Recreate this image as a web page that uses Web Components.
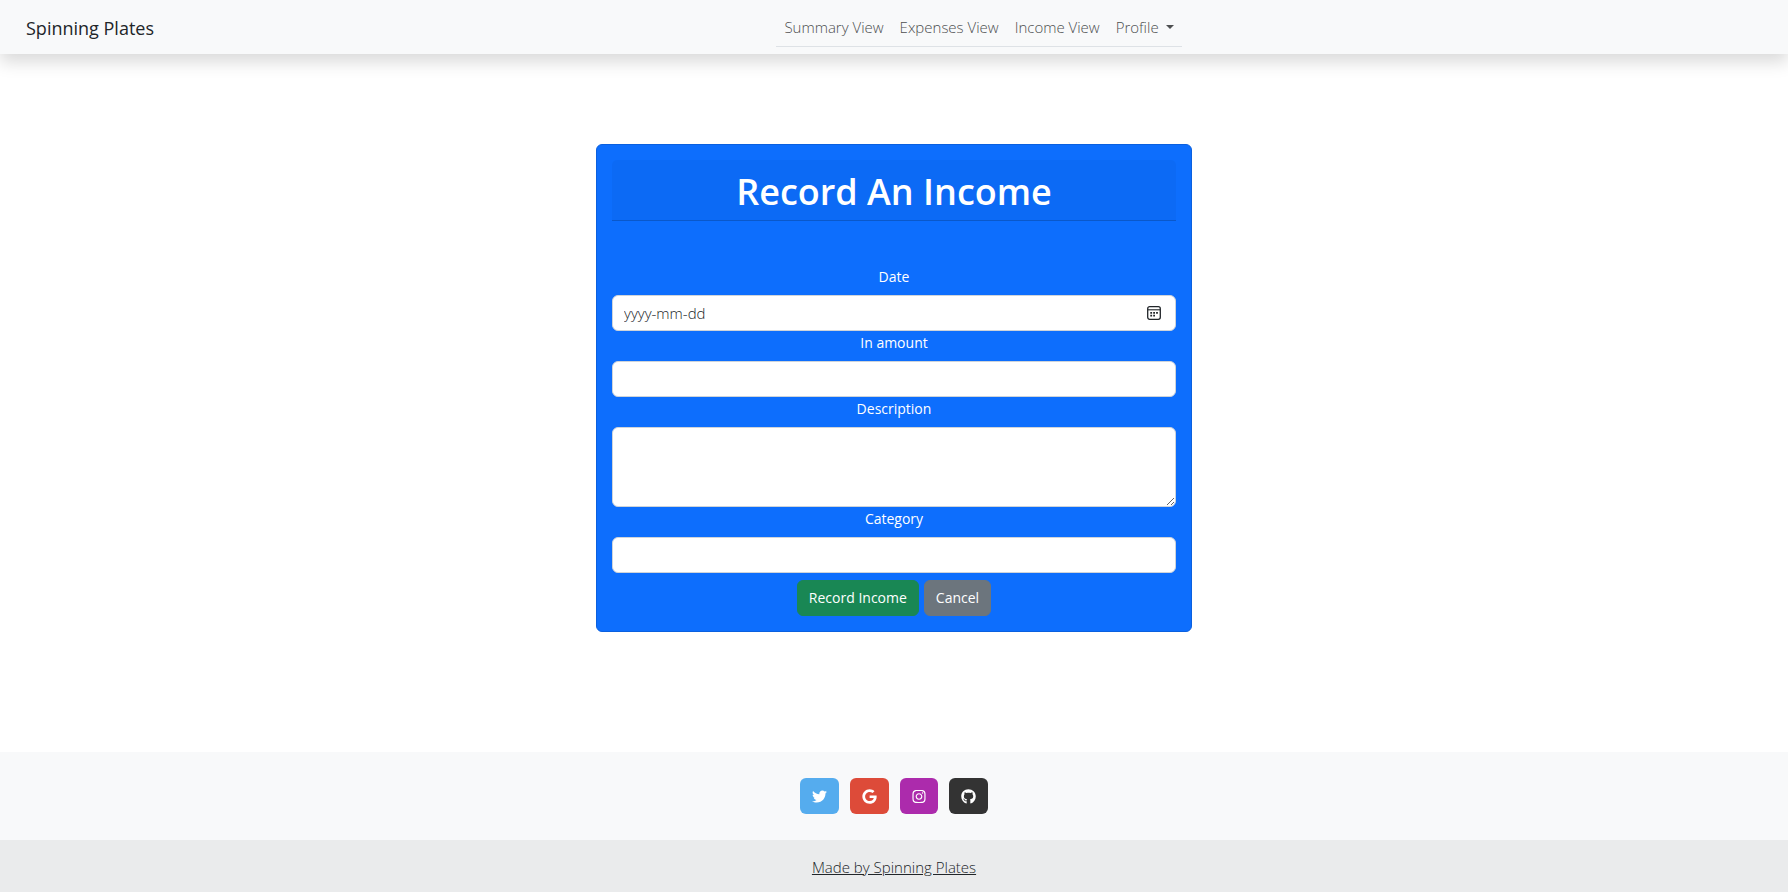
<!DOCTYPE html>
<html lang="en">
<head>
<meta charset="utf-8">
<title>Spinning Plates - Record An Income</title>
<style>
  body { margin: 0; font: 14px/22px "Open Sans", "Noto Sans", sans-serif; color: #212529; background: #fff; }
</style>
</head>
<body>
<app-page>
  <nav-bar slot="header" brand="Spinning Plates">
    <nav-item>Summary View</nav-item>
    <nav-item>Expenses View</nav-item>
    <nav-item>Income View</nav-item>
    <nav-item dropdown>Profile</nav-item>
  </nav-bar>
  <form-card heading="Record An Income">
    <form-field type="date" label="Date"></form-field>
    <form-field type="text" label="In amount"></form-field>
    <form-field type="textarea" label="Description"></form-field>
    <form-field type="text" label="Category"></form-field>
    <action-button slot="actions" variant="success">Record Income</action-button>
    <action-button slot="actions" variant="secondary">Cancel</action-button>
  </form-card>
  <page-footer slot="footer">
    <social-link name="twitter"></social-link>
    <social-link name="google"></social-link>
    <social-link name="instagram"></social-link>
    <social-link name="github"></social-link>
    <a slot="credit" href="#" style="color: inherit">Made by Spinning Plates</a>
  </page-footer>
</app-page>

<script>
class BaseElement extends HTMLElement {
  connectedCallback() {
    if (this.shadowRoot) return;
    const template = document.createElement('template');
    template.innerHTML = '<style>*{box-sizing:border-box}</style>' + this.render();
    this.attachShadow({ mode: 'open' }).append(template.content.cloneNode(true));
  }
}

customElements.define('app-page', class extends BaseElement {
  render() {
    return `<style>
      :host { display: flex; flex-direction: column; min-height: 100vh; }
      main { flex: 1; padding: 90px 0; display: flex; flex-direction: column; align-items: center; }
    </style>
    <slot name="header"></slot><main><slot></slot></main><slot name="footer"></slot>`;
  }
});

customElements.define('nav-bar', class extends BaseElement {
  render() {
    return `<style>
      :host { display: block; background: #f8f9fa; box-shadow: 0 8px 16px rgba(0,0,0,.15); }
      nav { display: flex; align-items: center; padding: 7px 0 7px 26px; }
      .brand { padding-top: 2px; font-size: 18px; line-height: 28px; color: #212529; text-decoration: none; margin-right: 16px; }
      .links { display: flex; margin: 0 auto; border-bottom: 1px solid #dee2e6; }
    </style>
    <nav aria-label="Main"><a class="brand" href="#">${this.getAttribute('brand')}</a><div class="links"><slot></slot></div></nav>`;
  }
});

customElements.define('nav-item', class extends BaseElement {
  render() {
    const drop = this.hasAttribute('dropdown');
    return `<style>
      :host { display: block; }
      a { display: flex; align-items: center; gap: 7px; padding: 9px 8px 8px; font-size: 15px; font-weight: 300; line-height: 22px; color: #4d4f50; text-decoration: none; }
      .caret { border: 4px solid transparent; border-top-color: #4d4f50; border-bottom: 0; }
    </style>
    <a href="#"${drop ? ' aria-haspopup="true"' : ''}><slot></slot>${drop ? '<span class="caret"></span>' : ''}</a>`;
  }
});

customElements.define('form-card', class extends BaseElement {
  render() {
    return `<style>
      :host { display: block; width: 33.3333%; min-width: 320px; box-sizing: border-box; padding: 15px; color: #fff; text-align: center;
        background: #0d6efd; border: 1px solid #0b60df; border-radius: 6px; }
      header { padding: 10px 15px 6px; background: rgba(0,0,0,.03); border-bottom: 1px solid rgba(0,0,0,.176); border-radius: 5px 5px 0 0; }
      h1 { margin: 0; font-size: 36px; line-height: 44px; font-weight: 600; }
      form { display: flex; flex-direction: column; padding-top: 44px; }
      .actions { display: flex; justify-content: center; gap: 5px; padding-top: 7px; }
    </style>
    <header><h1>${this.getAttribute('heading')}</h1></header>
    <form><slot></slot><div class="actions"><slot name="actions"></slot></div></form>`;
  }
});

customElements.define('form-field', class extends BaseElement {
  render() {
    const type = this.getAttribute('type');
    const control = type === 'textarea'
      ? '<textarea id="control"></textarea>'
      : `<input id="control" type="text"${type === 'date' ? ' placeholder="yyyy-mm-dd"' : ''}>`;
    const picker = type === 'date' ? `<button type="button" aria-label="Choose a date">
      <svg width="14" height="14" viewBox="0 0 14 14" fill="none" stroke="#212529">
        <rect x=".7" y=".7" width="12.6" height="12.6" rx="2" stroke-width="1.3"/>
        <path d="M1 3.8h12" stroke-width="1.1"/>
        <path d="M3.3 6.8h1.8m1.1 0h1.8m1.1 0h1.8M3.3 9.7h1.8m1.1 0h1.8" stroke-width="1.7"/>
      </svg></button>` : '';
    return `<style>
      :host { display: block; }
      label { display: block; line-height: 24px; margin-bottom: 6px; }
      .box { display: grid; align-items: center; }
      input, textarea, button { grid-area: 1 / 1; }
      input, textarea { display: block; width: 100%; height: 36px; margin: 0; padding: 6px 11px; font: inherit; color: #212529;
        background: #fff; border: 1px solid #ced4da; border-radius: 6px; }
      input { font-size: 15px; font-weight: 300; }
      input::placeholder { color: #212529; opacity: 1; }
      textarea { height: 80px; resize: vertical; }
      button { justify-self: end; display: flex; margin: 0 15px 0 0; padding: 0; border: 0; background: none; }
    </style>
    <label for="control">${this.getAttribute('label')}</label><div class="box">${control}${picker}</div>`;
  }
});

customElements.define('action-button', class extends BaseElement {
  render() {
    return `<style>
      :host { display: block; }
      button { display: block; padding: 6px 11px; font: inherit; line-height: 22px; color: #fff; border: 1px solid transparent; border-radius: 6px; background-clip: border-box; }
      .success { background: #198754; border-color: #198754; }
      .secondary { background: #6c757d; border-color: #6c757d; }
    </style>
    <button type="button" class="${this.getAttribute('variant')}"><slot></slot></button>`;
  }
});

customElements.define('page-footer', class extends BaseElement {
  render() {
    return `<style>
      :host { display: block; background: #f8f9fa; }
      .social { display: flex; justify-content: center; gap: 11px; padding: 26px 16px; }
      .credit { padding: 16px 15px 14px; font-size: 15px; font-weight: 300; text-align: center; background: #eaebec; }
    </style>
    <footer><div class="social"><slot></slot></div><div class="credit"><slot name="credit"></slot></div></footer>`;
  }
});

const ICONS = {
  twitter: { color: '#55acee', label: 'Twitter', w: 512, width: 15, path: 'M459.37 151.716c.325 4.548.325 9.097.325 13.645 0 138.72-105.583 298.558-298.558 298.558-59.452 0-114.68-17.219-161.137-47.106 8.447.974 16.568 1.299 25.34 1.299 49.055 0 94.213-16.568 130.274-44.832-46.132-.975-84.792-31.188-98.112-72.772 6.498.974 12.995 1.624 19.818 1.624 9.421 0 18.843-1.3 27.614-3.573-48.081-9.747-84.143-51.98-84.143-102.985v-1.299c13.969 7.797 30.214 12.67 47.431 13.319-28.264-18.843-46.781-51.005-46.781-87.391 0-19.492 5.197-37.36 14.294-52.954 51.655 63.675 129.3 105.258 216.365 109.807-1.624-7.797-2.599-15.918-2.599-24.04 0-57.828 46.782-104.934 104.934-104.934 30.213 0 57.502 12.67 76.67 33.137 23.715-4.548 46.456-13.32 66.599-25.34-7.798 24.366-24.366 44.833-46.132 57.827 21.117-2.273 41.584-8.122 60.426-16.243-14.292 20.791-32.161 39.308-52.628 54.253z' },
  google: { color: '#dd4b39', label: 'Google', w: 488, width: 15, path: 'M488 261.8C488 403.3 391.1 504 248 504 110.8 504 0 393.2 0 256S110.8 8 248 8c66.8 0 123 24.5 166.3 64.9l-67.5 64.9C258.5 52.6 94.3 116.6 94.3 256c0 86.5 69.1 156.6 153.7 156.6 98.2 0 135-70.4 140.8-106.9H248v-85.3h236.1c2.3 12.7 3.9 24.9 3.9 41.4z' },
  instagram: { color: '#ac2bac', label: 'Instagram', w: 448, width: 14, path: 'M224.1 141c-63.6 0-114.9 51.3-114.9 114.9s51.3 114.9 114.9 114.9S339 319.5 339 255.9 287.7 141 224.1 141zm0 189.6c-41.1 0-74.7-33.5-74.7-74.7s33.5-74.7 74.7-74.7 74.7 33.5 74.7 74.7-33.6 74.7-74.7 74.7zm146.4-194.3c0 14.9-12 26.8-26.8 26.8-14.9 0-26.8-12-26.8-26.8s12-26.8 26.8-26.8 26.8 12 26.8 26.8zm76.1 27.2c-1.7-35.9-9.9-67.7-36.2-93.9-26.2-26.2-58-34.4-93.9-36.2-37-2.1-147.9-2.1-184.9 0-35.8 1.7-67.6 9.9-93.9 36.1s-34.4 58-36.2 93.9c-2.1 37-2.1 147.9 0 184.9 1.7 35.9 9.9 67.7 36.2 93.9s58 34.4 93.9 36.2c37 2.1 147.9 2.1 184.9 0 35.9-1.7 67.7-9.9 93.9-36.2 26.2-26.2 34.4-58 36.2-93.9 2.1-37 2.1-147.8 0-184.8zM398.8 388c-7.8 19.6-22.9 34.7-42.6 42.6-29.5 11.7-99.5 9-132.1 9s-102.7 2.6-132.1-9c-19.6-7.8-34.7-22.9-42.6-42.6-11.7-29.5-9-99.5-9-132.1s-2.6-102.7 9-132.1c7.8-19.6 22.9-34.7 42.6-42.6 29.5-11.7 99.5-9 132.1-9s102.7-2.6 132.1 9c19.6 7.8 34.7 22.9 42.6 42.6 11.7 29.5 9 99.5 9 132.1s2.7 102.7-9 132.1z' },
  github: { color: '#333333', label: 'GitHub', w: 496, width: 15, path: 'M165.9 397.4c0 2-2.3 3.6-5.2 3.6-3.3.3-5.6-1.3-5.6-3.6 0-2 2.3-3.6 5.2-3.6 3-.3 5.6 1.3 5.6 3.6zM244.8 8C106.1 8 0 113.3 0 252c0 110.9 69.8 205.8 169.5 239.2 12.8 2.3 17.3-5.6 17.3-12.1 0-6.2-.3-40.4-.3-61.4 0 0-70 15-84.7-29.8 0 0-11.4-29.1-27.8-36.6 0 0-22.9-15.7 1.6-15.4 0 0 24.9 2 38.6 25.8 21.9 38.6 58.6 27.5 72.9 20.9 2.3-16 8.8-27.1 16-33.7-55.9-6.2-112.3-14.3-112.3-110.5 0-27.5 7.6-41.3 23.6-58.9-2.6-6.5-11.1-33.3 2.6-67.9 20.9-6.5 69 27 69 27 20-5.6 41.5-8.5 62.8-8.5s42.8 2.9 62.8 8.5c0 0 48.1-33.6 69-27 13.7 34.7 5.2 61.4 2.6 67.9 16 17.7 25.8 31.5 25.8 58.9 0 96.5-58.9 104.2-114.8 110.5 9.2 7.9 17 22.9 17 46.4 0 33.7-.3 75.4-.3 83.6 0 6.5 4.6 14.4 17.3 12.1C428.2 457.8 496 362.9 496 252 496 113.3 383.5 8 244.8 8z' }
};

customElements.define('social-link', class extends BaseElement {
  render() {
    const icon = ICONS[this.getAttribute('name')];
    return `<style>
      :host { display: block; }
      a { display: flex; align-items: center; height: 36px; padding: 0 12px; border-radius: 6px; background: ${icon.color}; }
    </style>
    <a href="#" aria-label="${icon.label}"><svg width="${icon.width}" height="15" viewBox="0 0 ${icon.w} 512" fill="#fff"><path d="${icon.path}"/></svg></a>`;
  }
});
</script>
</body>
</html>
